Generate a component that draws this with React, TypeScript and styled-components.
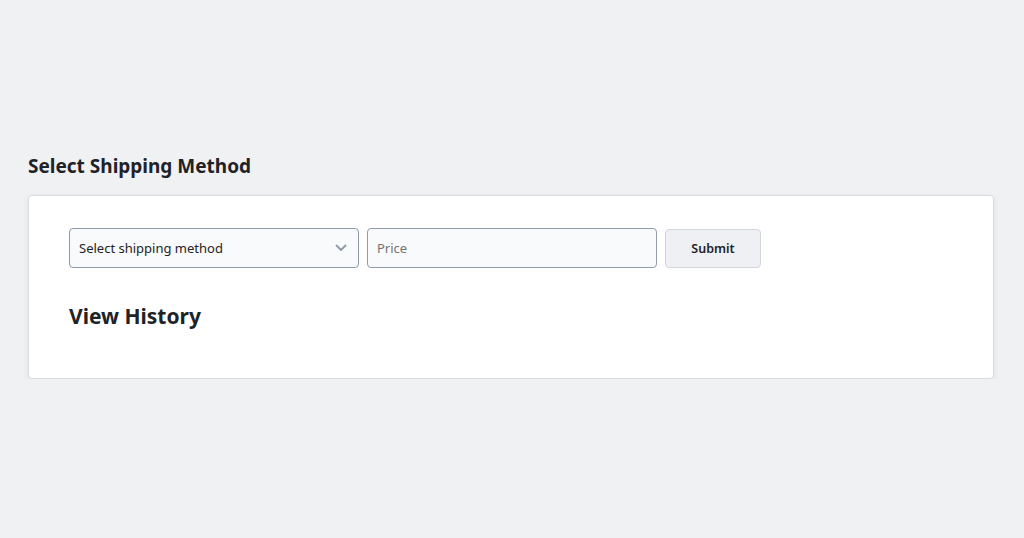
import React from "react";
import styled, { createGlobalStyle } from "styled-components";

const Global = createGlobalStyle`
  html, body { margin: 0; padding: 0; background: #f0f1f3; }
  body { font-family: "Noto Sans", "Open Sans", sans-serif; color: #1f2328; }
  * { box-sizing: border-box; }
`;

const Page = styled.div`
  padding: 152px 30px 0 28px;
`;

const Title = styled.h2`
  margin: 0 0 15px 0;
  font-size: 19px;
  font-weight: 700;
  line-height: 28px;
  color: #1f2328;
`;

const Card = styled.div`
  background: #fff;
  border: 1px solid #d9dce1;
  border-radius: 4px;
  box-shadow: 0 2px 6px rgba(30, 40, 60, 0.08);
  padding: 32px 40px 47px 40px;
`;

const Row = styled.div`
  display: flex;
  gap: 8px;
  align-items: center;
`;

const SelectWrap = styled.div`
  position: relative;
  width: 290px;
`;

const Select = styled.select`
  appearance: none;
  width: 100%;
  height: 40px;
  border: 1px solid #8f9bab;
  border-radius: 4px;
  background: #f9fafb;
  padding: 0 32px 0 9px;
  font-family: inherit;
  font-size: 13px;
  color: #1f2328;
`;

const Chevron = styled.svg`
  position: absolute;
  right: 12px;
  top: 50%;
  transform: translateY(-50%);
  pointer-events: none;
`;

const Input = styled.input`
  width: 290px;
  height: 40px;
  border: 1px solid #8f9bab;
  border-radius: 4px;
  background: #f9fafb;
  padding: 0 9px;
  font-family: inherit;
  font-size: 13px;
  color: #1f2328;
  &::placeholder { color: #77726f; }
`;

const Button = styled.button`
  width: 96px;
  height: 39px;
  border: 1px solid #d3d7dd;
  border-radius: 4px;
  background: #eff0f3;
  font-family: inherit;
  font-size: 12.5px;
  font-weight: 600;
  color: #1f2328;
`;

const Sub = styled.h3`
  margin: 33px 0 0 0;
  font-size: 21px;
  font-weight: 700;
  line-height: 30px;
  color: #1f2328;
`;

export default function App() {
  return (
    <>
      <Global />
      <Page>
        <Title>Select Shipping Method</Title>
        <Card>
          <Row>
            <SelectWrap>
              <Select defaultValue="">
                <option value="">Select shipping method</option>
              </Select>
              <Chevron width="12" height="8" viewBox="0 0 12 8">
                <path d="M1.5 1.5 L6 6 L10.5 1.5" fill="none" stroke="#8f9bab" strokeWidth="1.8" strokeLinecap="round" strokeLinejoin="round" />
              </Chevron>
            </SelectWrap>
            <Input placeholder="Price" />
            <Button>Submit</Button>
          </Row>
          <Sub>View History</Sub>
        </Card>
      </Page>
    </>
  );
}
